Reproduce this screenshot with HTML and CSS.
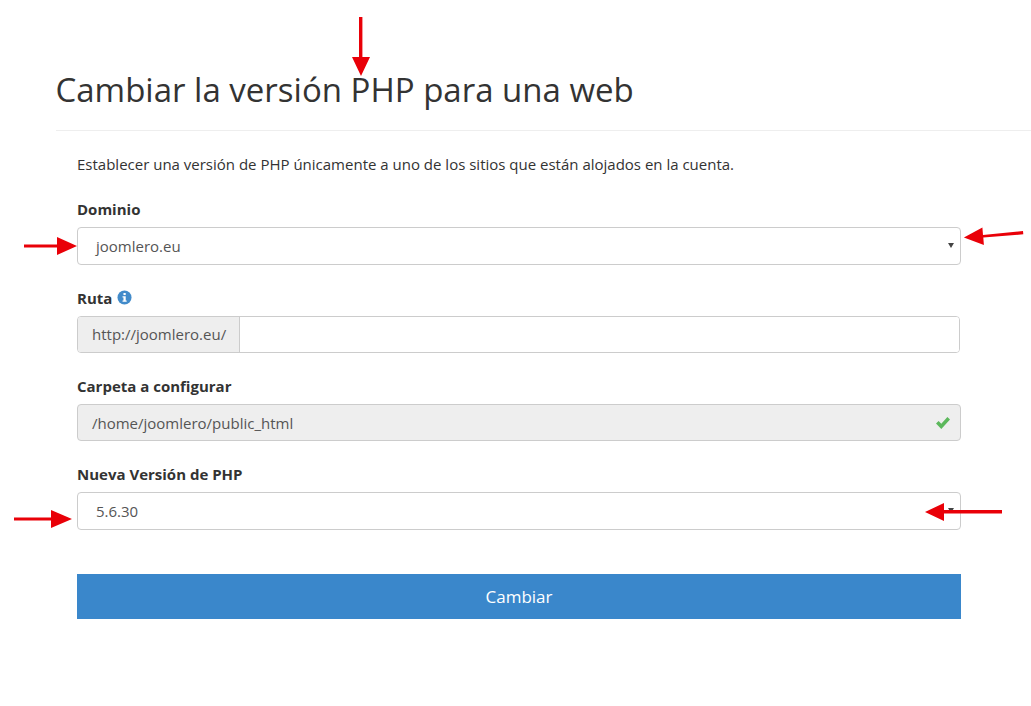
FILE: index.html
```html
<!DOCTYPE html>
<html>
<head>
    <title>Cambiar la versión PHP para una web</title>
    <link rel="stylesheet" href="styles.css">
</head>
<body>
    <div class="page">
        <h1 class="page-title">Cambiar la versión PHP para una web</h1>

        <form class="panel">
            <p class="intro">Establecer una versión de PHP únicamente a uno de los sitios que están alojados en la cuenta.</p>

            <div class="field field-domain">
                <label class="field-label">Dominio</label>
                <div class="select-box">joomlero.eu<span class="caret"></span></div>
            </div>

            <div class="field field-path">
                <label class="field-label">Ruta
                    <svg class="info-icon" viewBox="0 0 16 16" width="15" height="15">
                        <circle cx="8" cy="8" r="7.5" fill="#428bca"/>
                        <rect x="6.9" y="3.2" width="2.4" height="2.2" fill="#fff"/>
                        <path d="M5.900 6.600h3.400v4.600h1v1.300H5.900v-1.300h1V7.900h-1z" fill="#fff"/>
                    </svg>
                </label>
                <div class="input-group">
                    <span class="input-addon">http://joomlero.eu/</span>
                    <span class="input-text"></span>
                </div>
            </div>

            <div class="field field-folder">
                <label class="field-label">Carpeta a configurar</label>
                <div class="readonly-box">/home/joomlero/public_html
                    <svg class="check-icon" viewBox="0 0 16 14" width="16" height="14">
                        <path d="M1 7.600l2.600-2.500 2.700 2.700L12.400 1 15 3.500 6.300 13z" fill="#5cb85c"/>
                    </svg>
                </div>
            </div>

            <div class="field field-version">
                <label class="field-label">Nueva Versión de PHP</label>
                <div class="select-box">5.6.30<span class="caret"></span></div>
            </div>

            <button type="button" class="submit-btn">Cambiar</button>
        </form>
    </div>

    <!-- red annotation arrows drawn over the screenshot -->
    <svg class="arrows" viewBox="0 0 1031 706" width="1031" height="706">
        <g fill="#e90008" stroke="none">
            <path d="M359 17h3.400v40h7.600l-9 19-9-19h7z"/>
            <path d="M24 244.500h33v-7.500l20 9-20 9v-7.500H24z"/>
            <path d="M1023 231l.3 3.300-40 3.200.6 7.500-20-7.500 18.500-10 .6 7.500z"/>
            <path d="M14 517.500h37v-7.500l21 9-21 9v-7.500H14z"/>
            <path d="M1002 510v3.400h-58v7.600l-19-9 19-9v7z"/>
        </g>
    </svg>
</body>
</html>
```

FILE: styles.css
```css
* { box-sizing: border-box; }
html, body { margin: 0; padding: 0; }
body { font-family: "Open Sans", sans-serif; font-size: 15px; color: #333; background: #fff; width: 1031px; height: 706px; overflow: hidden; position: relative; }

.page { padding: 65px 0 0 56px; }
.page-title { margin: 0; font-size: 33px; font-weight: 400; line-height: 50px; height: 66px; text-indent: -0.5px; border-bottom: 1px solid #eee; }

.panel { width: 884px; margin-left: 21px; padding-top: 23px; }
.intro { margin: 0; line-height: 20px; height: 20px; }

.field-label { display: block; font-weight: 700; line-height: 20px; height: 20px; }
.field-domain { margin-top: 25px; }
.field-path { margin-top: 23px; }
.field-folder { margin-top: 23px; }
.field-version { margin-top: 23px; }
.field-domain .select-box { margin-top: 8px; }
.field-version .select-box { margin-top: 8px; }
.field-path .input-group, .field-folder .readonly-box { margin-top: 8px; }

.select-box { position: relative; height: 38px; line-height: 36px; padding-left: 18px; color: #555; background: #fff; border: 1px solid #ccc; border-radius: 4px; }
.caret { position: absolute; right: 6px; top: 15px; width: 0; height: 0; border-left: 3.5px solid transparent; border-right: 3.5px solid transparent; border-top: 5px solid #444; }

.info-icon { vertical-align: -1px; margin-left: 1px; }

.input-group { display: flex; width: 883px; height: 37px; border: 1px solid #ccc; border-radius: 4px; overflow: hidden; color: #555; }
.input-addon { width: 162px; padding-left: 14px; line-height: 35px; background: #eee; border-right: 1px solid #ccc; }
.input-text { flex: 1; background: #fff; }

.readonly-box { display: flex; align-items: center; justify-content: space-between; width: 884px; height: 37px; padding: 0 9px 0 14px; color: #555; background: #eee; border: 1px solid #ccc; border-radius: 4px; }

.submit-btn { display: block; width: 884px; height: 45px; margin-top: 44px; padding: 0; font-family: inherit; font-size: 17px; color: #fff; background: #3a87cb; border: 0; }

.arrows { position: absolute; left: 0; top: 0; pointer-events: none; }
```
